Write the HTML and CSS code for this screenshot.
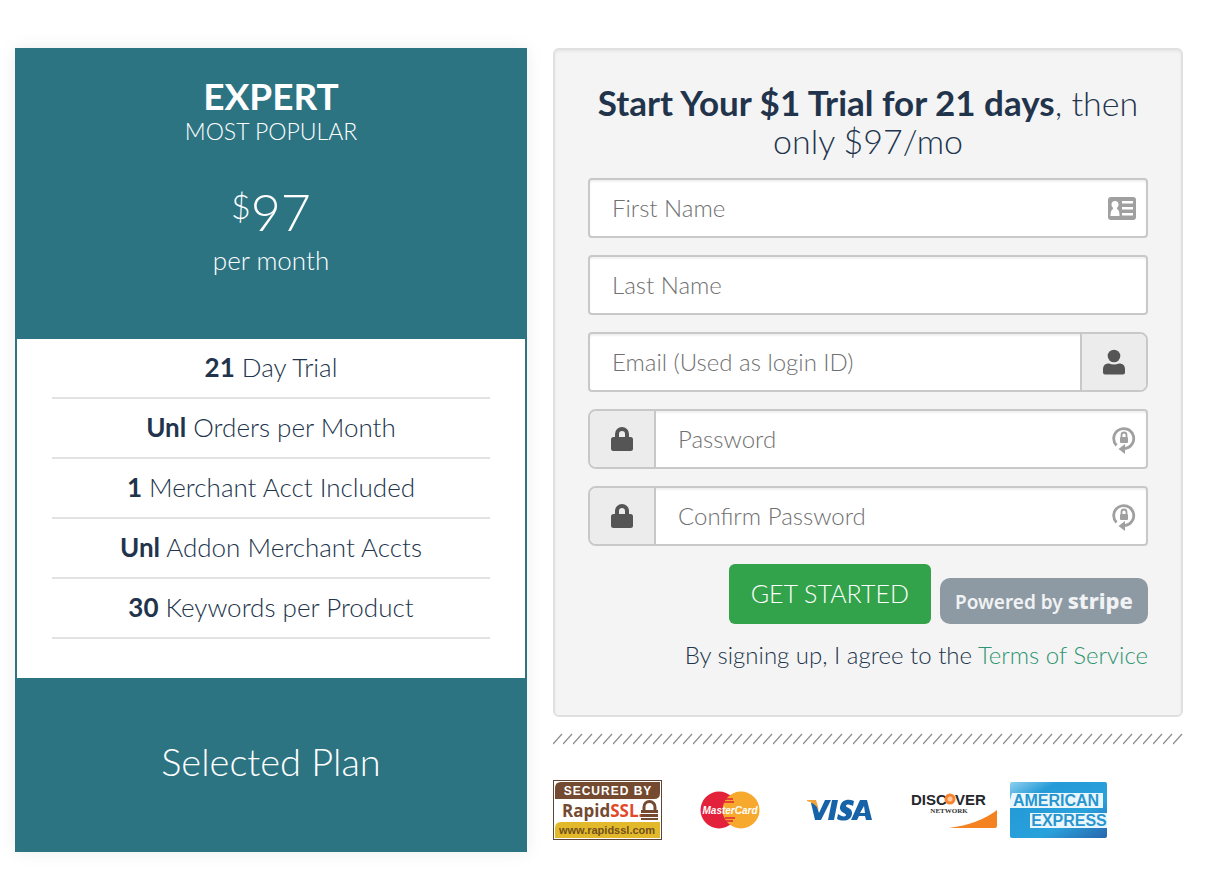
FILE: index.html
```html
<!DOCTYPE html>
<html lang="en">
<head>
<meta charset="utf-8">
<meta name="viewport" content="width=device-width, initial-scale=1">
<title>Start Your Trial</title>
<link rel="stylesheet" href="styles.css">
</head>
<body>
<svg class="sprite" aria-hidden="true">
  <symbol id="lock" viewBox="0 0 22 26">
    <path fill="none" stroke="currentColor" stroke-width="4" d="M6 12V8a5 5 0 0 1 10 0v4"/>
    <rect y="11" width="22" height="14" rx="2.5" fill="currentColor"/>
  </symbol>
  <symbol id="cycle" viewBox="0 0 24 30">
    <path fill="none" stroke="#a0a0a0" stroke-width="2.8" d="M4.500 21.500A10 10 0 1 1 13 24.500"/>
    <path fill="#a0a0a0" d="M6.500 25l6.500-5v10z"/>
    <path fill="none" stroke="#a0a0a0" stroke-width="1.800" d="M9.500 13.500V11a2.500 2.500 0 0 1 5 0v2.500"/>
    <rect x="8" y="13" width="8" height="6" rx="1" fill="#a0a0a0"/>
  </symbol>
</svg>
<main class="page">
  <section class="plan">
    <header class="plan-head">
      <h2 class="plan-name">EXPERT</h2>
      <p class="plan-tag">MOST POPULAR</p>
      <p class="price"><span class="currency">$</span>97</p>
      <p class="period">per month</p>
    </header>
    <ul class="features">
      <li><strong>21</strong> Day Trial</li>
      <li><strong>Unl</strong> Orders per Month</li>
      <li><strong>1</strong> Merchant Acct Included</li>
      <li><strong>Unl</strong> Addon Merchant Accts</li>
      <li><strong>30</strong> Keywords per Product</li>
    </ul>
    <footer class="plan-foot">Selected Plan</footer>
  </section>

  <section class="signup">
    <form class="panel">
      <h1 class="title"><strong>Start Your $1 Trial for 21 days</strong>, then only $97/mo</h1>
      <div class="field">
        <input type="text" aria-label="First Name" placeholder="First Name">
        <svg class="card-icon" viewBox="0 0 28 23" aria-hidden="true">
          <rect width="28" height="23" rx="3" fill="#a0a0a0"/>
          <circle cx="7" cy="7.500" r="3.500" fill="#fff"/>
          <path fill="#fff" d="M5 9h4v3c2 1 2.500 3 2.500 7h-9c0-4 .5-6 2.500-7zM14 4h11v2.500H14zM14 10h11v2.500H14zM14 16h11v2.500H14z"/>
        </svg>
      </div>
      <div class="field">
        <input type="text" aria-label="Last Name" placeholder="Last Name">
      </div>
      <div class="field addon-right">
        <input type="email" aria-label="Email" placeholder="Email (Used as login ID)">
        <span class="addon">
          <svg class="user-icon" viewBox="0 0 22 25" aria-hidden="true"><circle cx="11" cy="6.500" r="6.300"/><path d="M0 23v-3c0-4 2-6 6-6q5 2 10 0c4 0 6 2 6 6v3q0 2-2 2H2q-2 0-2-2z"/></svg>
        </span>
      </div>
      <div class="field addon-left">
        <span class="addon"><svg class="lock-icon" aria-hidden="true"><use href="#lock"/></svg></span>
        <input type="password" aria-label="Password" placeholder="Password">
        <svg class="cycle-icon" aria-hidden="true"><use href="#cycle"/></svg>
      </div>
      <div class="field addon-left">
        <span class="addon"><svg class="lock-icon" aria-hidden="true"><use href="#lock"/></svg></span>
        <input type="password" aria-label="Confirm Password" placeholder="Confirm Password">
        <svg class="cycle-icon" aria-hidden="true"><use href="#cycle"/></svg>
      </div>
      <div class="actions">
        <button class="submit" type="submit">GET STARTED</button>
        <span class="stripe">Powered by <b>stripe</b></span>
      </div>
      <p class="terms">By signing up, I agree to the <a href="#">Terms of Service</a></p>
    </form>

    <svg class="hatch" aria-hidden="true">
      <defs><pattern id="slashes" width="10" height="12" patternUnits="userSpaceOnUse"><path d="M0 11L9 1" stroke="#8c8c8c" stroke-width="1.200"/></pattern></defs>
      <rect width="100%" height="12" fill="url(#slashes)"/>
    </svg>

    <div class="badges">
      <svg class="rapidssl" viewBox="0 0 109 60" role="img" aria-label="Secured by RapidSSL">
        <rect x=".5" y=".5" width="108" height="59" fill="#fff" stroke="#5f4538"/>
        <path fill="#744a31" d="M8 2h99v11q0 6-6 6H2V8q0-6 6-6z"/>
        <path fill="#e3b92c" d="M8 42h99v16H2V48q0-6 6-6z"/>
        <text x="55" y="15" class="ssl-top">SECURED BY</text>
        <text x="9" y="37" class="ssl-name">Rapid<tspan fill="#e0492a">SSL.</tspan></text>
        <text x="54" y="54" class="ssl-url">www.rapidssl.com</text>
        <path fill="none" stroke="#744a31" stroke-width="3" d="M91 31v-4a5.500 5.500 0 0 1 11 0v4"/>
        <path fill="#744a31" d="M88 30h17v3H88zM88 34h17v3H88zM88 38h17v2H88z"/>
      </svg>
      <svg class="mastercard" viewBox="0 0 60 38" role="img" aria-label="MasterCard">
        <circle cx="19" cy="19" r="18.500" fill="#e4213b"/>
        <circle cx="41" cy="19" r="18.500" fill="#f6a92c"/>
        <path stroke="#e4213b" stroke-width="1.500" d="M25 8h8M24 11h10M25 27h10M26 30h7"/>
        <text x="30" y="23" class="mc-name">MasterCard</text>
      </svg>
      <svg class="visa" viewBox="0 0 66 24" role="img" aria-label="Visa">
        <path fill="#1763a7" d="M8 2l4 13L18 2h6L14 22H8L4 5zM25 2h6l-4 20h-6zM47 3l-1 5c-4-2-7-2-7 0s7 2 6 8c-1 7-9 8-15 5l1-5c4 3 8 3 8 1s-7-3-6-8c1-7 8-9 14-6zM53 2h7l5 20h-6l-1-4h-6l-2 4h-6zM57 8l-4 7h5z"/>
        <path fill="#f0a43a" d="M0 2h9l3 10Q8 5 0 3z"/>
      </svg>
      <svg class="discover" viewBox="0 0 87 40" role="img" aria-label="Discover Network">
        <text x="0" y="15" class="disc-name">DISC</text>
        <text x="44" y="15" class="disc-name">VER</text>
        <circle cx="39" cy="9" r="5.500" fill="#f58432"/><circle cx="39" cy="9" r="2.500" fill="#ffc99a"/>
        <text x="38" y="23" class="disc-net">NETWORK</text>
        <path fill="#f58220" d="M38 38Q68 34 86 20v16q0 2-2 2z"/>
      </svg>
      <svg class="amex" viewBox="0 0 98 56" role="img" aria-label="American Express">
        <defs><linearGradient id="amexBlue" x1="0" y1="0" x2="1" y2="1"><stop offset="0" stop-color="#8fd0ee"/><stop offset=".25" stop-color="#249bd7"/><stop offset=".65" stop-color="#29a1db"/><stop offset="1" stop-color="#2866ac"/></linearGradient></defs>
        <rect width="97" height="56" rx="2" fill="url(#amexBlue)"/>
        <path fill="#e9f7fd" d="M2 11h91v15H0v-8zM20 31h77v15H20z"/>
        <text x="46" y="24" class="amex-text">AMERICAN</text>
        <text x="59" y="44" class="amex-text">EXPRESS</text>
      </svg>
    </div>
  </section>
</main>
</body>
</html>
```
FILE: styles.css
```css
* { box-sizing: border-box; }

body {
  margin: 0;
  background: #fff;
  color: #22344c;
  font: 300 26px/36px Lato, "Liberation Sans", sans-serif;
}

h1, h2, p, ul { margin: 0; padding: 0; font-weight: inherit; }
strong { font-weight: 700; }
.sprite { position: absolute; width: 0; height: 0; }

.page {
  display: grid;
  grid-template-columns: 512fr 630fr;
  gap: 26px;
  align-items: start;
  padding: 48px 30px 23px 15px;
}

/* Plan card */
.plan {
  border: 2px solid #2d7483;
  box-shadow: 0 0 16px rgba(0, 0, 0, 0.08);
  text-align: center;
}
.plan-head {
  padding: 27px 20px 62px;
  background: #2d7483;
  color: #fff;
}
.plan-name { font-size: 37px; line-height: 38px; font-weight: 700; }
.plan-tag { font-size: 23px; line-height: 32px; }
.price { margin-top: 32px; font-size: 52px; line-height: 64px; }
.currency { font-size: 34px; line-height: 36px; vertical-align: 12px; }
.period { line-height: 34px; }
.features { list-style: none; padding: 0 35px 39px; }
.features li {
  padding: 10px 0 12px;
  border-bottom: 2px solid #e2e2e2;
}
.plan-foot {
  padding: 57px 20px 63px;
  background: #2d7483;
  color: #fff;
  font-size: 38px;
  line-height: 52px;
}

/* Sign-up form */
.panel {
  display: flex;
  flex-direction: column;
  gap: 17px;
  padding: 33px 33px 42px;
  border: 2px solid #e0e0e0;
  border-radius: 6px;
  background: #f4f4f4;
  box-shadow: inset 0 2px 3px rgba(0, 0, 0, 0.05);
}
.title {
  padding-bottom: 1px;
  font-size: 34px;
  line-height: 38px;
  text-align: center;
}
.title strong { font-size: 35px; }

.field {
  display: flex;
  align-items: center;
  height: 60px;
  overflow: hidden;
  border: 2px solid #c8c8c8;
  border-radius: 4px;
  background: #fff;
  box-shadow: inset 0 2px 2px rgba(0, 0, 0, 0.06);
}
.field input {
  flex: 1;
  min-width: 0;
  height: 100%;
  padding: 0 22px 2px;
  border: 0;
  outline: 0;
  background: transparent;
  color: #22344c;
  font: inherit;
  font-size: 24px;
}
.field input::placeholder { color: #707070; opacity: 1; }
.addon {
  display: flex;
  align-items: center;
  justify-content: center;
  width: 66px;
  height: 100%;
  background: #ececec;
  color: #555;
}
.addon-left { border-radius: 8px 4px 4px 8px; }
.addon-right { border-radius: 4px 8px 8px 4px; }
.addon-left .addon { border-right: 2px solid #c8c8c8; }
.addon-right .addon { border-left: 2px solid #c8c8c8; }
.user-icon { width: 22px; height: 26px; fill: #555; }
.lock-icon { width: 22px; height: 26px; }
.card-icon { width: 28px; height: 23px; margin-right: 10px; }
.cycle-icon { width: 24px; height: 30px; margin-right: 10px; }

.actions {
  display: flex;
  align-items: flex-end;
  justify-content: flex-end;
  gap: 9px;
  margin-top: 1px;
}
.submit {
  height: 60px;
  padding: 0 22px 2px;
  border: 0;
  border-radius: 6px;
  background: #32a34a;
  color: #fff;
  font: inherit;
  font-size: 25px;
}
.stripe {
  width: 208px;
  height: 46px;
  border-radius: 10px;
  background: #8e9aa3;
  color: #f0f2f4;
  font: 600 19px/44px "Noto Sans", sans-serif;
  text-align: center;
  white-space: nowrap;
}
.stripe b { font-size: 22px; font-weight: 800; }
.terms { margin-top: -4px; font-size: 24px; text-align: right; }
.terms a { color: #2f9470; text-decoration: none; }

.hatch { display: block; width: 100%; height: 12px; margin-top: 16px; }

/* Trust badges */
.badges { display: flex; align-items: center; padding-top: 35px; }
.badges svg { flex: none; overflow: visible; }
.badges text { text-anchor: middle; font-family: "Liberation Sans", sans-serif; font-weight: 700; }
.rapidssl { width: 109px; height: 60px; }
.mastercard { width: 60px; height: 38px; margin-left: 38px; }
.visa { width: 66px; height: 24px; margin-left: 47px; }
.discover { width: 87px; height: 40px; margin-left: 38px; }
.amex { width: 98px; height: 56px; margin-left: 12px; }
.badges .ssl-top { fill: #fff; font-size: 12px; letter-spacing: 1px; }
.badges .ssl-name { fill: #744a31; font-family: "Open Sans", sans-serif; font-size: 17px; text-anchor: start; }
.badges .ssl-url { fill: #70501d; font-size: 11px; }
.badges .mc-name { fill: #fff; font-size: 10px; font-style: italic; }
.badges .disc-name { fill: #25272b; font-size: 15px; text-anchor: start; }
.badges .disc-net { fill: #333; font-family: "Liberation Serif", serif; font-size: 7px; }
.badges .amex-text { fill: #2995cf; font-size: 16px; }
```
